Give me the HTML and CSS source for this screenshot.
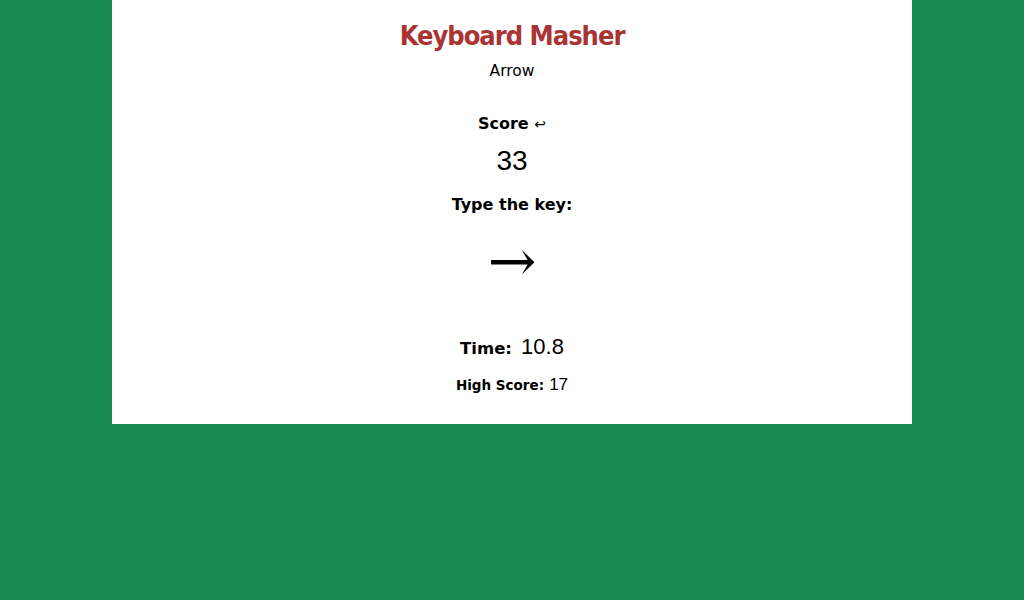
FILE: index.html
```html
<!DOCTYPE html>
<html>
<head>
<meta charset="utf-8">
<link rel="stylesheet" href="styles.css">
</head>
<body>
<main class="game">
  <h1 class="title">Keyboard Masher</h1>
  <div class="mode">Arrow</div>
  <div class="score-label">Score <span class="undo">↩</span></div>
  <div class="score">33</div>
  <div class="prompt">Type the key:</div>
  <div class="key">→</div>
  <div class="time"><span class="label">Time:</span> <span class="time-val">10.8</span></div>
  <div class="high"><span class="label">High Score:</span> <span class="high-val">17</span></div>
</main>
</body>
</html>
```
FILE: styles.css
```css
html, body { margin: 0; padding: 0; }
body {
  background: #188a52;
  height: 600px;
  overflow: hidden;
}
.game {
  width: 800px;
  margin: 0 auto;
  background: #fff;
  height: 424px;
  display: flex;
  flex-direction: column;
  align-items: center;
  text-align: center;
  color: #000;
}
.title {
  margin: 19px 0 0;
  font-family: "DejaVu Sans Condensed", "DejaVu Sans", sans-serif;
  font-stretch: condensed;
  font-weight: bold;
  font-size: 27px;
  line-height: 34px;
  letter-spacing: -1px;
  color: #a83434;
}
.mode {
  margin-top: 8px;
  font-family: "DejaVu Sans", sans-serif;
  font-size: 15.5px;
  line-height: 20px;
}
.score-label {
  margin-top: 32px;
  font-family: "DejaVu Sans", sans-serif;
  font-weight: bold;
  font-size: 16px;
  line-height: 22px;
}
.undo { font-weight: normal; font-size: 14px; }
.score {
  margin-top: 9px;
  font-family: "Liberation Sans", sans-serif;
  font-size: 28px;
  line-height: 34px;
}
.prompt {
  margin-top: 16px;
  font-family: "DejaVu Sans", sans-serif;
  font-weight: bold;
  font-size: 16px;
  line-height: 22px;
}
.key {
  margin-top: 20px;
  font-family: "DejaVu Serif", serif;
  font-size: 58px;
  line-height: 50px;
}
.time {
  margin-top: 48px;
  font-family: "DejaVu Sans", sans-serif;
  line-height: 26px;
}
.time .label { font-weight: bold; font-size: 16.5px; }
.time-val { font-family: "Liberation Sans", sans-serif; font-size: 22px; margin-left: 4px; }
.high {
  margin-top: 12px;
  font-family: "DejaVu Sans", sans-serif;
  line-height: 22px;
}
.high .label { font-weight: bold; font-size: 13.5px; }
.high-val { font-family: "Liberation Sans", sans-serif; font-size: 17px; }
```
